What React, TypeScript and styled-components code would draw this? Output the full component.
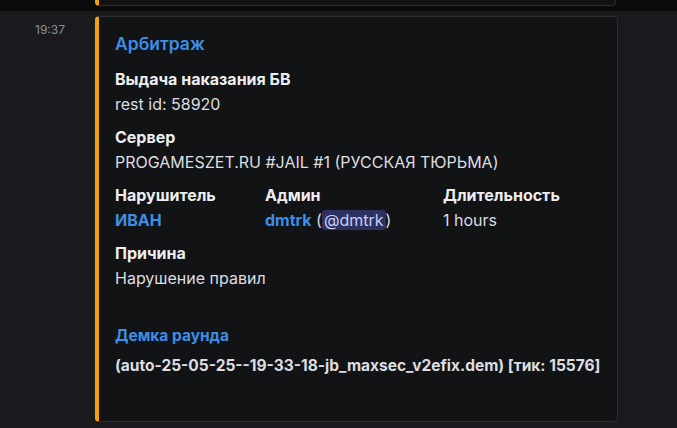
import React from 'react';
import styled, { createGlobalStyle } from 'styled-components';

const GlobalStyle = createGlobalStyle`
  html, body {
    margin: 0;
    padding: 0;
    background: #1a1a1e;
    font-family: Inter, "Noto Sans", sans-serif;
  }
`;

const Page = styled.div`
  width: 677px;
  height: 428px;
  overflow: hidden;
  background: #1a1a1e;
`;

const PrevRow = styled.div`
  height: 11px;
  background: #0b0b0c;
  padding-left: 95px;
  box-sizing: border-box;
`;

const PrevEmbed = styled.div`
  width: 521px;
  height: 6px;
  box-sizing: border-box;
  background: #111214;
  border: 1px solid #2c2d31;
  border-top: none;
  border-left: 4px solid #f0a30a;
  border-radius: 0 0 4px 4px;
`;

const MessageRow = styled.div`
  display: flex;
  align-items: flex-start;
  padding-top: 5px;
`;

const Time = styled.div`
  width: 95px;
  box-sizing: border-box;
  padding: 6px 0 0 35px;
  font-size: 12px;
  line-height: 16px;
  color: #8e9096;
`;

const Embed = styled.div<{ $accent: string }>`
  width: 523px;
  height: 406px;
  box-sizing: border-box;
  background: #121315;
  border: 1px solid #2c2d31;
  border-left: 4px solid ${({ $accent }) => $accent};
  border-radius: 4px;
  padding: 16px 16px 16px 16px;
`;

const Title = styled.div`
  font-size: 17.5px;
  line-height: 22px;
  font-weight: 600;
  color: #3c8ee6;
  margin-bottom: 14px;
`;

const Fields = styled.div`
  display: grid;
  grid-template-columns: 150px 178px 1fr;
  row-gap: 12px;
`;

const Field = styled.div<{ $inline?: boolean }>`
  grid-column: ${({ $inline }) => ($inline ? 'auto' : '1 / -1')};
  min-width: 0;
`;

const FieldName = styled.div`
  font-size: 16px;
  line-height: 20px;
  font-weight: 700;
  color: #eceef0;
  margin-bottom: 4px;
`;

const FieldValue = styled.div<{ $bold?: boolean }>`
  font-size: ${({ $bold }) => ($bold ? '15.5px' : '16px')};
  line-height: 22px;
  font-weight: ${({ $bold }) => ($bold ? 700 : 400)};
  color: #dcdee1;
  white-space: pre-wrap;
`;

const LinkText = styled.span`
  color: #3c8ee6;
  font-weight: 700;
`;

const Mention = styled.span`
  color: #c9cdfb;
  background: #2d3162;
  border-radius: 3px;
  padding: 0 2px;
`;

const Line = styled.div`
  & + & {
    margin-top: 8px;
  }
`;

export default function App() {
  return (
    <Page>
      <GlobalStyle />
      <PrevRow>
        <PrevEmbed />
      </PrevRow>
      <MessageRow>
        <Time>19:37</Time>
        <Embed $accent="#f0a30a">
          <Title>Арбитраж</Title>
          <Fields>
            <Field>
              <FieldName>Выдача наказания БВ</FieldName>
              <FieldValue>rest id: 58920</FieldValue>
            </Field>
            <Field>
              <FieldName>Сервер</FieldName>
              <FieldValue>PROGAMESZET.RU #JAIL #1 (РУССКАЯ ТЮРЬМА)</FieldValue>
            </Field>
            <Field $inline>
              <FieldName>Нарушитель</FieldName>
              <FieldValue>
                <LinkText>ИВАН</LinkText>
              </FieldValue>
            </Field>
            <Field $inline>
              <FieldName>Админ</FieldName>
              <FieldValue>
                <LinkText>dmtrk</LinkText> (<Mention>@dmtrk</Mention>)
              </FieldValue>
            </Field>
            <Field $inline>
              <FieldName>Длительность</FieldName>
              <FieldValue>1 hours</FieldValue>
            </Field>
            <Field>
              <FieldName>Причина</FieldName>
              <FieldValue>Нарушение правил</FieldValue>
            </Field>
            <Field>
              <FieldName>{'\u00a0'}</FieldName>
              <FieldValue $bold>
                <Line>
                  <LinkText>Демка раунда</LinkText>
                </Line>
                <Line>(auto-25-05-25--19-33-18-jb_maxsec_v2efix.dem) [тик: 15576]</Line>
              </FieldValue>
            </Field>
          </Fields>
        </Embed>
      </MessageRow>
    </Page>
  );
}
